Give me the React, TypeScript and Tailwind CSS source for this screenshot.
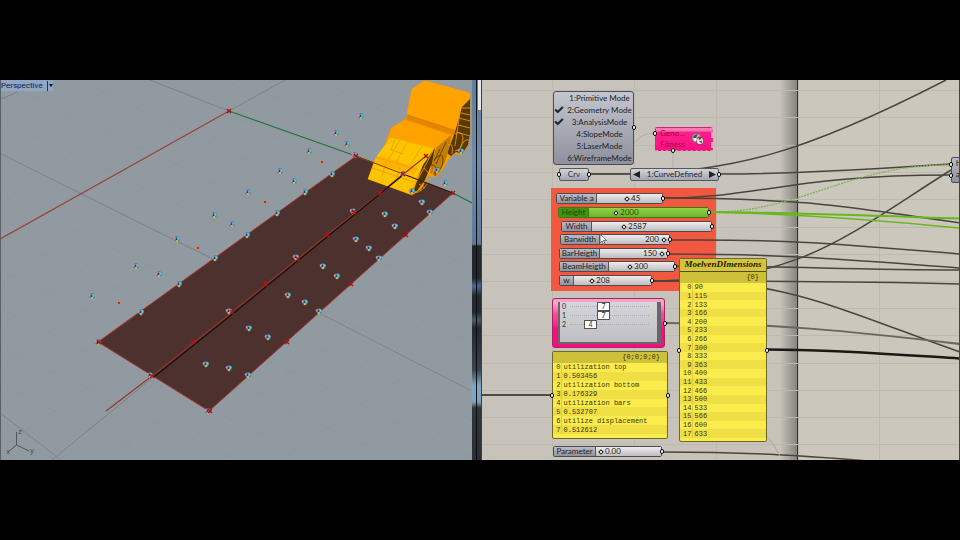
import { Check } from 'lucide-react';
import clsx from 'clsx';

interface SliderNode {
    id: string;
    label: string;
    value: string;
    /** knob centre, px from the left end of the track */
    knob: number;
    track: number;
    place: string;
    labelWidth: string;
    valueFirst?: boolean;
    selected?: boolean;
}

const sliders: SliderNode[] = [
    { id: 'variable-a', label: 'Variable a', value: '45', knob: 30, track: 66, place: 'left-[74px] top-[113px] w-[107px]', labelWidth: 'w-[40px]' },
    { id: 'height', label: 'Height', value: '2000', knob: 27, track: 120, place: 'left-[76px] top-[127px] w-[151px]', labelWidth: 'w-[30px]', selected: true },
    { id: 'width', label: 'Width', value: '2587', knob: 32, track: 120, place: 'left-[79px] top-[141px] w-[151px]', labelWidth: 'w-[30px]' },
    { id: 'barwidth', label: 'Barwidth', value: '200', knob: 65, track: 70, place: 'left-[78px] top-[154px] w-[110px]', labelWidth: 'w-[39px]', valueFirst: true },
    { id: 'barheigth', label: 'BarHeigth', value: '150', knob: 63, track: 68, place: 'left-[77px] top-[168px] w-[109px]', labelWidth: 'w-[40px]', valueFirst: true },
    { id: 'beamheigth', label: 'BeamHeigth', value: '300', knob: 21, track: 66, place: 'left-[77px] top-[181px] w-[116px]', labelWidth: 'w-[49px]' },
    { id: 'w', label: 'w', value: '208', knob: 18, track: 78, place: 'left-[77px] top-[195px] w-[93px]', labelWidth: 'w-[14px]' },
    { id: 'parameter', label: 'Parameter', value: '0.00', knob: 5, track: 66, place: 'left-[71px] top-[366px] w-[109px]', labelWidth: 'w-[42px]' },
];

const modes = [
    { name: '1:Primitive Mode', on: false },
    { name: '2:Geometry Mode', on: true },
    { name: '3:AnalysisMode', on: true },
    { name: '4:SlopeMode', on: false },
    { name: '5:LaserMode', on: false },
    { name: '6:WireframeMode', on: false },
];

const genes = [
    { value: '7', offset: 'w-[27px]' },
    { value: '7', offset: 'w-[27px]' },
    { value: '4', offset: 'w-[14px]' },
];

const utilization = [
    'utilization top', '0.503456',
    'utilization bottom', '0.176329',
    'utilization bars', '0.532707',
    'utilize displacement', '0.512612',
];

const dimensions = ['90', '115', '133', '166', '200', '233', '266', '300', '333', '363', '400', '433', '466', '500', '533', '566', '600', '633'];

// control points of the surface, world positions already projected
const points = [
    [214, 215], [232, 224], [177, 239], [215, 258], [136, 266], [159, 274], [361, 116], [336, 133], [347, 144],
    [309, 151], [332, 174], [280, 171], [294, 181], [305, 192], [248, 192], [277, 213], [247, 235], [385, 214],
    [395, 226], [430, 212], [356, 239], [379, 258], [323, 266], [445, 183], [412, 191], [437, 170], [461, 151],
    [296, 257], [92, 296], [141, 312], [179, 284], [229, 311], [150, 375], [206, 364], [229, 368], [337, 276],
    [288, 295], [319, 311], [249, 328], [268, 337], [248, 375], [355, 155], [403, 174], [98, 342], [208, 411],
    [353, 211], [422, 202], [369, 248], [305, 302],
];
const smallPoints = [[198, 248], [322, 162], [265, 202], [119, 303]];
const crosses = [
    [229, 111], [356, 156], [380, 193], [354, 212], [327, 235], [298, 259], [426, 156], [403, 174], [453, 193],
    [406, 235], [99, 342], [232, 312], [193, 342], [152, 376], [210, 411], [351, 284], [265, 284], [287, 342],
];

function Port({ className }: { className: string }) {
    return <span className={clsx('absolute w-[4px] h-[5px] rounded-full border border-black bg-white', className)} />;
}

function Slider({ node }: { node: SliderNode }) {
    return (
        <div
            className={clsx(
                'absolute flex h-[11px] rounded-[2px] border text-[8px] leading-[9px]',
                node.place,
                node.selected ? 'border-[#3d7a10] bg-[#7cc02f] text-[#1f4a06]' : 'border-[#4d4a4c] bg-[#d9d7d8] text-[#222]'
            )}
        >
            <label
                htmlFor={node.id}
                className={clsx(
                    'shrink-0 border-r text-center whitespace-nowrap overflow-hidden',
                    node.labelWidth,
                    node.selected
                        ? 'border-[#3d7a10] bg-[#3f9414]'
                        : 'border-[#555] bg-linear-to-b from-[#bcbdc6] to-[#8f919d]'
                )}
            >
                {node.label}
            </label>
            <div className={clsx('relative flex-1', node.selected ? 'bg-linear-to-b from-[#93d24a] to-[#6db324]' : 'bg-linear-to-b from-[#eeedee] via-[#d6d4d6] to-[#bebcbe]')}>
                <input
                    id={node.id}
                    type="range"
                    min={2}
                    max={node.track - 2}
                    defaultValue={node.knob}
                    className="absolute inset-0 w-full h-full appearance-none bg-transparent [&::-webkit-slider-thumb]:appearance-none [&::-webkit-slider-thumb]:w-[4px] [&::-webkit-slider-thumb]:h-[4px] [&::-webkit-slider-thumb]:rotate-45 [&::-webkit-slider-thumb]:border [&::-webkit-slider-thumb]:border-[#111] [&::-webkit-slider-thumb]:bg-white"
                />
                <output
                    htmlFor={node.id}
                    className={clsx('absolute top-0 pointer-events-none', node.valueFirst && '-translate-x-full')}
                    style={{ left: node.valueFirst ? node.knob - 6 : node.knob + 4 }}
                >
                    {node.value}
                </output>
            </div>
            <Port className="-right-[3px] top-[2px]" />
        </div>
    );
}

function DataRows({ rows, indexWidth }: { rows: string[]; indexWidth: string }) {
    return (
        <table className="w-full flex-1 border-collapse">
            <tbody>
                {rows.map((row, index) => (
                    <tr key={index} className="odd:bg-[#fbec4d] even:bg-[#efdf45]">
                        <td className={clsx('p-0 text-right border-r border-[#dccb3c]', indexWidth)}>{index}</td>
                        <td className="p-0 pl-[2px] whitespace-nowrap">{row}</td>
                    </tr>
                ))}
            </tbody>
        </table>
    );
}

function Car() {
    return (
        <g strokeLinejoin="round">
            <path d="M425 80.500L470 93V134L467 147L461 155L455 153L450 157L441 172L435 177L429 175L421 189L412 195L368 179L376 157L381 156L391 128L407 118L408 108L412 89Z" fill="#ffa200" stroke="#f09000" strokeWidth=".6" />
            <path d="M425 80.500L470 93L462 107L455 132L407 116L408 108L412 89Z" fill="#ffa300" />
            <path d="M407 114L456 130L454 136L406 120Z" fill="#e88b00" />
            <path d="M408 116L454 131M407 118L454 133" stroke="#c97400" strokeWidth=".5" />
            <path d="M391 137L434 147L420 170L410 194L368 179L376 157Z" fill="#ffc400" />
            <path d="M376 157L381 156L417 167L414 175L374 163Z" fill="#ffb300" />
            <path d="M391 137L434 148M376 157L418 170M372 168L414 182M400 140L388 160M407 142L396 163M395 139L391 150L404 154M422 146L410 166M386 162L382 176M400 167L396 181" fill="none" stroke="#e89a00" strokeWidth=".7" />
            <path d="M470 99L462 107L455 132L452 140L447 153L451 156L456 152L462 154L468 145L470 134Z" fill="#5a3900" />
            <path d="M436 148L452 134L449 148L446 160L440 172L435 176L430 173L432 162Z" fill="#c47d00" />
            <path d="M435 148L423 165L413 192L417 191L425 180L432 163Z" fill="#4f3305" />
            <path d="M462 108H470M461 113L470 115M459 118L470 121M458 125L470 128M456 132L470 136M460 112L455 146M455 134Q462 130 463 138Q462 150 455 151M448 145Q454 142 452 154M469 140Q464 138 460 149L464 153M433 151L417 181M424 168L432 177M413 193Q424 193 430 178L434 170M419 184L425 188" fill="none" stroke="#f5a000" strokeWidth=".8" />
            <path d="M434 160Q443 150 443 160T434 173M446 142L436 164M440 149L434 161M431 165Q438 164 435 176" fill="none" stroke="#5a3900" strokeWidth=".8" />
        </g>
    );
}

function Viewport() {
    return (
        <section className="relative overflow-hidden bg-[#919aa1] border-l border-[#5b6168]">
            <svg className="absolute inset-0 w-full h-full" viewBox="1 80 471 380" preserveAspectRatio="xMinYMin slice">
                <defs>
                    <pattern id="minor" width="40" height="40" patternUnits="userSpaceOnUse" patternTransform="matrix(.88 .42 -.82 .56 0 80)">
                        <path d="M0 0H40M0 0V40" fill="none" stroke="#858e95" strokeWidth=".6" />
                    </pattern>
                </defs>
                <rect x="0" y="80" width="472" height="380" fill="url(#minor)" />
                <g fill="none" stroke="#7b7984" strokeWidth=".8">
                    <path d="M1 154L215 260M319 313L470 390M150 80L229 111L285 80M0 413L61 460M52 460L152 378M1 99L18 92" />
                </g>
                <path d="M0 239L229 111" stroke="#9a4238" strokeWidth="1.200" />
                <path d="M229 111L356 156M453 193L472 203" stroke="#23733b" strokeWidth="1.200" />
                <path d="M98 342L356 156L453 193L209 411Z" fill="#4c312e" stroke="#a8382e" strokeWidth="1" />
                <Car />
                <path d="M356 156L403 174" stroke="#7b4300" strokeWidth="1" />
                <path d="M403 174L453 193" stroke="#2b1a14" strokeWidth="1.200" />
                <path d="M106 411L152 376L232 312L327 235L380 193L426 156" fill="none" stroke="#983327" strokeWidth="1.100" />
                <path d="M154 377L240 308L403 175" fill="none" stroke="#14100f" strokeWidth="1.200" />
                {points.map(([x, y]) => (
                    <g key={`${x}-${y}`}>
                        <circle cx={x} cy={y} r="2.800" fill="#447a93" />
                        <circle cx={x - 2} cy={y - 0.5} r="1.300" fill="#d886b4" />
                        <circle cx={x} cy={y + 2} r="1.300" fill="#cbb450" />
                        <circle cx={x + 1} cy={y - 0.5} r="1.600" fill="#55cbe4" />
                        <circle cx={x - 0.5} cy={y} r="1" fill="#2f3450" />
                    </g>
                ))}
                {smallPoints.map(([x, y]) => (
                    <g key={`${x}-${y}`}>
                        <circle cx={x} cy={y} r="2" fill="#c98a64" />
                        <circle cx={x} cy={y} r="1" fill="#8e1f28" />
                    </g>
                ))}
                {crosses.map(([x, y]) => (
                    <path key={`${x}-${y}`} d={`M${x - 2} ${y - 2}l4 4m0 -4l-4 4`} stroke="#b01212" strokeWidth="1.500" />
                ))}
                <g stroke="#4f575e" strokeWidth="1" fill="none">
                    <path d="M16.500 432V445L8 452M16.500 445L29 451" />
                </g>
                <g fill="#4a5158" fontSize="8" fontFamily="Liberation Sans, sans-serif">
                    <text x="18" y="434">z</text>
                    <text x="6" y="454">x</text>
                    <text x="30" y="453">y</text>
                </g>
            </svg>
            <button type="button" className="relative flex items-center h-[11px] gap-[4px] bg-[#8fa6c9] font-[Roboto,sans-serif] text-[8px] leading-[11px] text-[#15233c]">
                Perspective
                <span className="flex items-center h-[10px] border-l border-[#26334a] pl-px">
                    <svg width="4" height="3" viewBox="0 0 4 3"><path d="M0 0h4L2 3z" fill="#111" /></svg>
                </span>
            </button>
        </section>
    );
}

function Wires() {
    return (
        <svg className="absolute inset-0 w-full h-full">
            <g transform="translate(-482 -80)" fill="none" stroke="#4a443d" strokeWidth="1.500">
                <path d="M589 174H630" stroke="#2c2825" />
                <path d="M630 174C735 170 800 155 946 80" />
                <path d="M720 174C790 174 860 170 951 164" />
                <path d="M663 198C760 198 790 175 951 175" />
                <path d="M663 198C740 198 760 200 800 202.500S900 214 960 223" />
                <path d="M670 240C790 239 840 244 960 254" />
                <path d="M668 254C790 254 850 260 960 268" />
                <path d="M675 266C790 266 850 270 960 270" />
                <path d="M652 281C770 281 850 281 960 284" />
                <path d="M652 281C800 281 840 240 951 170" />
                <path d="M652 281C780 276 840 310 960 352" />
                <path d="M666 323C770 323 850 331 960 344" stroke="#6a6560" strokeWidth="2" />
                <path d="M767 349.500C830 349.500 890 354 960 358.500" stroke="#1b1816" strokeWidth="2.500" />
                <path d="M661 452C750 452 810 456 880 462" />
                <path d="M482 395H552" stroke="#504b46" strokeWidth="2" />
                <path d="M767 436Q774 444 780 456" stroke="#aaa69e" strokeWidth="1" />
                <path d="M634 144Q640 133 655 133M673 152V168" stroke="#aeb0a8" strokeWidth="1" />
                <path d="M710 212C800 213 850 164 951 165" stroke="#86b34f" strokeWidth="1.300" strokeDasharray="2 1" />
                <path d="M710 212C800 213 880 216 960 218.500" stroke="#67b81c" strokeWidth="2" />
                <path d="M710 212C800 214 880 220 960 228" stroke="#67b81c" strokeWidth="1.500" />
            </g>
        </svg>
    );
}

function CanvasGrid() {
    const rows = [10, 37, 65, 92, 119, 147, 174, 201, 228, 255, 283, 310, 337, 364];
    const columns = [70, 152, 234, 316, 397];
    return (
        <svg className="absolute inset-0 w-full h-full">
            {rows.map((y) => <rect key={y} x="0" y={y} width="100%" height="1" fill="#bdb9b0" />)}
            {columns.map((x) => <rect key={x} x={x} y="0" width="1" height="100%" fill="#bdb9b0" />)}
        </svg>
    );
}

function Canvas() {
    return (
        <section className="relative overflow-hidden bg-[#ccc7bd] border-r border-[#444]">
            <div className="absolute inset-y-0 left-0 w-[316px] border-r border-[#2f2f2e] bg-[linear-gradient(to_right,#c8c3ba,#c8c3ba_298px,#858581)]" />
            <CanvasGrid />
            {/* group behind the slider bank */}
            <div className="absolute left-[69px] top-[108px] w-[165px] h-[103px] bg-[#f2573f] border border-dotted border-[#c8685a]" />
            <Wires />

            <ul className="absolute left-[71px] top-[11px] w-[81px] rounded-[3px] border border-[#4c4d55] bg-linear-to-b from-[#c4c6cf] to-[#8e909c] text-[8px] text-[#1d1d22]">
                {modes.map((mode) => (
                    <li key={mode.name} className="flex items-center h-[12px] leading-[12px]">
                        <span className="w-[12px] shrink-0">
                            {mode.on && <Check size={10} strokeWidth={5} className="text-[#222831]" />}
                        </span>
                        <span className="flex-1 text-center whitespace-nowrap">{mode.name}</span>
                    </li>
                ))}
                <Port className="-right-[3px] top-[33px]" />
            </ul>

            <div className="absolute left-[77px] top-[88px] w-[30px] h-[13px] rounded-[2px] border border-[#55565e] bg-linear-to-b from-[#d3d4db] to-[#a3a5b0] text-center text-[8px] leading-[11px] text-[#333]">
                Crv
                <Port className="-left-[3px] top-[3px]" />
                <Port className="-right-[3px] top-[3px]" />
            </div>

            <div className="absolute left-[148px] top-[88px] w-[89px] h-[13px] flex items-center justify-between px-px rounded-[2px] border border-[#55565e] bg-linear-to-b from-[#d3d4db] to-[#a3a5b0] text-[8px] leading-[11px] text-[#222]">
                <button type="button" aria-label="Previous">
                    <svg width="8" height="7" viewBox="0 0 8 7"><path d="M8 0v7L1 3.500z" fill="#222" /></svg>
                </button>
                1:CurveDefined
                <button type="button" aria-label="Next">
                    <svg width="8" height="7" viewBox="0 0 8 7"><path d="M0 0v7l7-3.500z" fill="#222" /></svg>
                </button>
                <Port className="-right-[3px] top-[3px]" />
            </div>

            <div className="absolute left-[173px] top-[47px] w-[58px] h-[24px] flex items-center rounded-[2px] border border-[#c0287a] border-r-2 border-r-[#e9a0c0] border-dashed bg-linear-to-b from-[#ff7ab5] from-10% via-[#ff1f8b] via-20% to-[#fb0f80] pl-[4px] text-[8px] leading-[11px] text-[#9b0b4e]">
                <div>
                    <p>Geno...</p>
                    <p>Fitness</p>
                </div>
                <svg className="absolute right-[6px] top-[4px]" width="14" height="14" viewBox="0 0 14 14">
                    <circle cx="5.500" cy="6" r="4.500" fill="#c9c9cf" stroke="#5d5d66" strokeWidth=".8" />
                    <circle cx="9" cy="9" r="3.800" fill="#e8e4e6" stroke="#6b2035" strokeWidth=".8" />
                    <path d="M2 6a4 4 0 0 1 5-3.500L5 6z" fill="#4a4a54" />
                    <path d="M7.500 4l3 2-2.500 2.500z" fill="#a21a2c" />
                    <path d="M8 9.500l3-1v3z" fill="#55555f" />
                    <circle cx="4.500" cy="7.500" r="1.200" fill="#fff" />
                </svg>
                <Port className="-left-[3px] top-[3px]" />
                <Port className="left-[15px] -bottom-[3px]" />
            </div>

            {sliders.map((node) => <Slider key={node.id} node={node} />)}

            <svg className="absolute left-[117px] top-[154px]" width="9" height="12" viewBox="0 0 9 12">
                <path d="M1 0v9l2-2 1.500 3.500 1.500-.7L4.500 6.500h3z" fill="#fff" stroke="#555" strokeWidth=".8" />
            </svg>

            {/* gene pool */}
            <div className="absolute left-[70px] top-[218px] w-[113px] h-[50px] flex rounded-[3px] border border-[#9b2a62] bg-linear-to-b from-[#f9a3c6] from-10% via-[#ff4a9c] via-30% to-[#ff0a80] to-60% pl-[5px] pr-[3px] py-[3px]">
                <div className="flex-1 border-x-2 border-b-2 border-r-4 border-[#67666c] bg-linear-to-b from-[#d6d5d7] to-[#bfbec2] text-[7px] text-[#2d2d35]">
                    {genes.map((gene, index) => (
                        <div key={index} className="flex items-center h-[9px] pl-[2px] pr-[8px] leading-[7px]">
                            <span className="w-[8px]">{index}</span>
                            <span className={clsx('border-t border-dotted border-[#aaaac4]', gene.offset)} />
                            <span className="w-[13px] h-[9px] border border-[#555] bg-white text-center">{gene.value}</span>
                            <span className="flex-1 border-t border-dotted border-[#aaaac4]" />
                        </div>
                    ))}
                </div>
                <Port className="-right-[3px] top-[22px]" />
            </div>

            <div className="absolute left-[70px] top-[271px] w-[116px] h-[88px] flex flex-col rounded-[2px] border border-[#6f6728] bg-[#fbec4d] pb-[4px] font-['Liberation_Mono',monospace] text-[7px] leading-[8px] text-[#3c3510]">
                <p className="h-[11px] leading-[11px] bg-[#cfc03a] pr-[7px] text-right">{'{0;0;0;0}'}</p>
                <DataRows rows={utilization} indexWidth="w-[8px]" />
                <Port className="-left-[3px] top-[41px]" />
                <Port className="-right-[3px] top-[41px]" />
            </div>

            <div className="absolute left-[197px] top-[178px] w-[88px] h-[184px] flex flex-col rounded-[2px] border border-[#6f6728] bg-[#fbec4d] pb-[3px] font-['Liberation_Mono',monospace] text-[7px] leading-[8px] text-[#3c3510]">
                <h2 className="h-[13px] border-b border-[#514b22] bg-[#d3c43b] text-center font-['Liberation_Serif',serif] text-[9px] leading-[11px] font-bold italic text-[#1d1a08]">
                    MoelvenDImensions
                </h2>
                <p className="h-[11px] leading-[11px] bg-[#cfc03a] pr-[7px] text-right">{'{0}'}</p>
                <DataRows rows={dimensions} indexWidth="w-[12px]" />
                <Port className="-left-[3px] top-[89px]" />
                <Port className="-right-[3px] top-[89px]" />
            </div>

            <div className="absolute left-[469px] top-[77px] w-[40px] h-[26px] rounded-[2px] border border-[#4c4d55] bg-linear-to-b from-[#b9bbc6] to-[#8e909c] pl-[4px] text-[8px] leading-[11px] text-[#1d1d22]">
                <p>h</p>
                <p>a</p>
                <Port className="-left-[3px] top-[4px]" />
                <Port className="-left-[3px] top-[15px]" />
            </div>
        </section>
    );
}

export default function App() {
    return (
        <div className="h-screen bg-black py-20 font-[Lato,'Noto_Sans',sans-serif]">
            <main className="grid h-full grid-cols-[472fr_10px_478fr]">
                <Viewport />
                <div className="relative flex bg-[linear-gradient(to_bottom,#5f7e9c,#6f8daa_80px,#5c7a98_164px,#23262c_166px,#23262c_198px,#4a6a94_206px,#25282e_216px,#25282e_232px,#4c5a68_240px,#24272d_248px,#3a4450_290px,#7fa3c0_305px,#7fa3c0_322px,#30343b_328px,#2b2e35)]">
                    <span className="ml-[4px] w-px bg-[#0b0c0f]" />
                    <span className="ml-px w-[3px] h-[30px] bg-[#e4e6e9]" />
                    <span className="w-px bg-[#3b3e44]" />
                </div>
                <Canvas />
            </main>
        </div>
    );
}
